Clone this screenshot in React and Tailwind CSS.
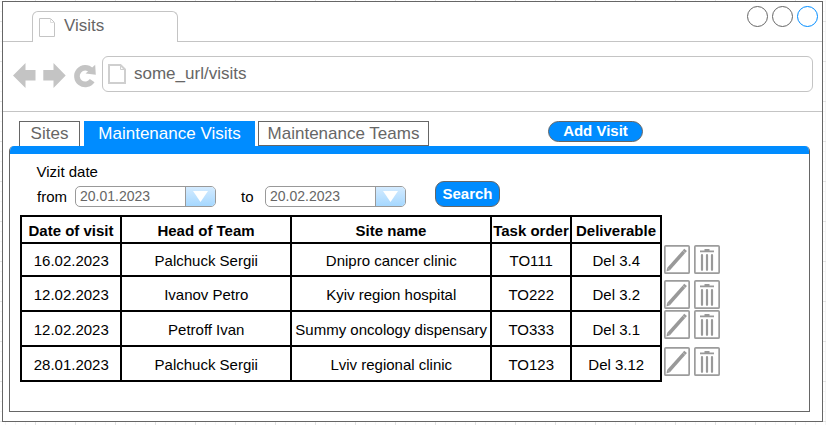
const visits = [
  ["16.02.2023", "Palchuck Sergii", "Dnipro cancer clinic", "TO111", "Del 3.4"],
  ["12.02.2023", "Ivanov Petro", "Kyiv region hospital", "TO222", "Del 3.2"],
  ["12.02.2023", "Petroff Ivan", "Summy oncology dispensary", "TO333", "Del 3.1"],
  ["28.01.2023", "Palchuck Sergii", "Lviv regional clinic", "TO123", "Del 3.12"],
];

const headers = ["Date of visit", "Head of Team", "Site name", "Task order", "Deliverable"];

const actionMargins = ["mt-[30px]", "mt-[6px]", "mt-px", "mt-[8px]"];

function TabPageIcon() {
  return (
    <svg className="mt-[6px] h-[19px] w-[16px]" fill="none" stroke="#c4c4c4">
      <path d="M.5 .5H11.5L15.5 4.5V18.5H.5Z" />
      <path d="M11.5 .5V4.5H15.5" stroke="#dedede" />
    </svg>
  );
}

function UrlPageIcon() {
  return (
    <svg className="mt-[7px] h-[20px] w-[18px]" fill="none" stroke="#cfcfcf" strokeWidth="2">
      <path d="M1 1H12.5L17 5.5V19H1Z" />
      <path d="M12.5 1.5V5.5H16.5" strokeWidth="1" />
    </svg>
  );
}

function DateSelect({ value, className }) {
  return (
    <div className={`flex h-[21px] w-[141px] overflow-hidden rounded-[5px] border border-[#999] bg-white ${className}`}>
      <span className="w-[109px] pl-1 text-[14px] leading-[19px] text-[#666]">{value}</span>
      <span className="flex flex-1 items-center justify-center border-l border-[#999] bg-linear-to-b from-[#d4ebff] to-[#a6d8ff]">
        <svg className="h-[11px] w-[15px]" viewBox="0 0 15 11">
          <path d="M0 0H15L7.5 11Z" fill="#fff" />
        </svg>
      </span>
    </div>
  );
}

function EditIcon() {
  return (
    <svg className="h-[29px] w-[26px]" viewBox="0 0 26 29" fill="none">
      <rect x=".85" y=".85" width="24.3" height="27.3" rx="1" stroke="#9c9c9c" strokeWidth="1.7" />
      <path d="M4.6 24L21.6 4.9" stroke="#999" strokeWidth="3.6" />
      <path d="M2.4 26.6L3.2 22.7L6 25.2Z" fill="#999" />
      <path d="M18.4 5.4L21.6 8.2" stroke="#fff" strokeOpacity=".5" strokeWidth=".7" />
    </svg>
  );
}

function TrashIcon() {
  return (
    <svg className="h-[29px] w-[26px]" viewBox="0 0 26 29" fill="none">
      <rect x=".85" y=".85" width="24.3" height="27.3" rx="1" stroke="#9c9c9c" strokeWidth="1.7" />
      <path d="M6 6.4H20M10.5 4.8H15.5" stroke="#999" strokeWidth="1.8" />
      <path d="M8 10.2V24.8M13 10.2V24.8M18 10.2V24.8" stroke="#999" strokeWidth="2.2" strokeLinecap="round" />
    </svg>
  );
}

export default function App() {
  return (
    <div className="h-[425px] w-[826px] overflow-hidden bg-white bg-[linear-gradient(to_right,#e2e2e2_1px,transparent_1px),linear-gradient(to_bottom,#e2e2e2_1px,transparent_1px),linear-gradient(to_right,#f5f5f5_1px,transparent_1px),linear-gradient(to_bottom,#f5f5f5_1px,transparent_1px)] bg-[size:40px_40px,40px_40px,10px_10px,10px_10px] bg-[position:35px_21px,35px_21px,5px_1px,5px_1px] pt-px pl-[2px] font-['Liberation_Sans',Arial,sans-serif]">
      <div className="flex h-[421px] w-[821px] flex-col border border-[#666] bg-white">
        <header className="flex h-[40px] shrink-0">
          <div className="w-[29px] border-b border-[#c4c4c4]" />
          <div className="mt-[9px] flex h-[31px] w-[146px] rounded-t-[6px] border border-b-0 border-[#c4c4c4] pl-[6px]">
            <TabPageIcon />
            <span className="mt-[4px] ml-[9px] text-[17px] leading-[20px] text-[#666]">Visits</span>
          </div>
          <div className="flex flex-1 justify-end gap-1 border-b border-[#c4c4c4] pt-1 pr-1">
            <span className="h-[21px] w-[21px] rounded-full border border-[#666]" />
            <span className="h-[21px] w-[21px] rounded-full border border-[#666]" />
            <span className="h-[21px] w-[21px] rounded-full border border-[#008cff]" />
          </div>
        </header>

        <nav className="flex h-[70px] shrink-0 border-b border-[#c4c4c4] pt-[14px] pl-[10px]">
          <svg className="mt-[7px] h-[25px] w-[83px]" viewBox="0 0 83 25">
            <path d="M0 12.5L12.5 0V7H22.5V17.5H12.5V25Z" fill="#c4c4c4" />
            <path d="M52.7 12.5L40.5 0V7H30.3V17.5H40.5V25Z" fill="#c4c4c4" />
            <path d="M79.2 17.6A8.3 8.3 0 1 1 78.2 7.3" fill="none" stroke="#c4c4c4" strokeWidth="5.6" />
            <path d="M82.2 1.8L82.8 11.8L72.6 10.5Z" fill="#c4c4c4" />
          </svg>
          <div className="ml-[6px] flex h-[36px] w-[711px] rounded-[6px] border border-[#c4c4c4] pl-[5px]">
            <UrlPageIcon />
            <span className="mt-[7px] ml-[8px] text-[17px] leading-[20px] text-[#666]">some_url/visits</span>
          </div>
        </nav>

        <main className="flex flex-1 flex-col pt-[9px] pl-[6px]">
          <div className="flex h-[25px] shrink-0 pl-[10px] text-[17px] leading-[20px] text-[#666]">
            <div className="w-[61px] border border-b-0 border-[#666] pt-[2px] text-center">Sites</div>
            <div className="ml-1 w-[171px] bg-[#008cff] pt-[3px] text-center text-white">Maintenance Visits</div>
            <div className="ml-[3px] w-[171px] border border-[#666] pt-[2px] text-center">Maintenance Teams</div>
            <button className="ml-[119px] h-[21px] w-[95px] rounded-full border border-[#666] bg-[#008cff] pb-[2px] text-[15px] leading-[17px] font-bold text-white">
              Add Visit
            </button>
          </div>
          <section className="flex h-[266px] w-[801px] shrink-0 flex-col overflow-hidden rounded-t-[5px] border border-t-0 border-[#666]">
            <div className="-mx-px h-[8px] shrink-0 bg-[#008cff]" />
            <div className="h-[61px] shrink-0 pt-[8px] pl-[26px] text-[15px] leading-[20px] text-black">
              <div className="pl-[0.5px]">Vizit date</div>
              <div className="flex">
                <span className="mt-[5px] w-[39px] pl-px">from</span>
                <DateSelect value="20.01.2023" className="mt-1" />
                <span className="mt-[5px] ml-[25px] w-[24px]">to</span>
                <DateSelect value="20.02.2023" className="mt-1" />
                <button className="-mt-px ml-[29px] h-[26px] w-[65px] rounded-[9px] border border-[#666] bg-[#008cff] text-[15px] leading-[24px] font-bold text-white">
                  Search
                </button>
              </div>
            </div>
            <div className="flex pl-[10px]">
              <div className="grid w-[642px] shrink-0 grid-cols-[98px_168px_198px_78px_88px] grid-rows-[25px_31px_33px_33px_33px] gap-[2px] bg-black p-[2px] text-[15px] leading-[20px] text-black">
                {headers.map((h) => (
                  <div key={h} className="flex items-center justify-center bg-white pt-[3px] font-bold whitespace-nowrap">
                    {h}
                  </div>
                ))}
                {visits.flatMap((row, r) =>
                  row.map((cell, c) => (
                    <div key={`${r}-${c}`} className="flex items-center justify-center bg-white pt-[3px] pl-[0.5px] whitespace-nowrap">
                      {cell}
                    </div>
                  ))
                )}
              </div>
              <div className="ml-[2px] flex flex-col">
                {actionMargins.map((margin) => (
                  <div key={margin} className={`flex h-[29px] gap-1 ${margin}`}>
                    <EditIcon />
                    <TrashIcon />
                  </div>
                ))}
              </div>
            </div>
          </section>
        </main>
      </div>
    </div>
  );
}
